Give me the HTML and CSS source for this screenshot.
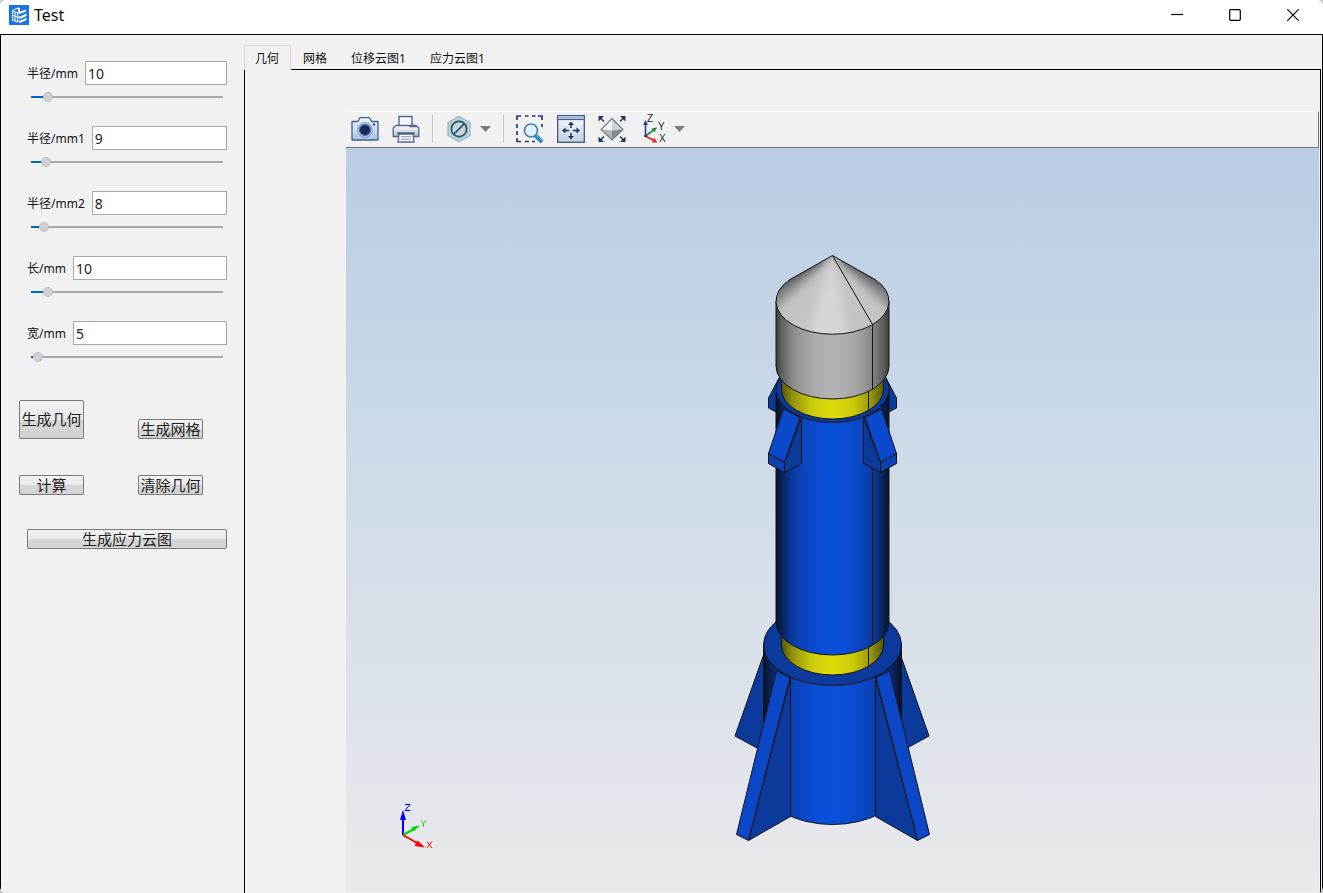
FILE: index.html
```html
<!DOCTYPE html>
<html lang="zh-CN">
<head>
<meta charset="utf-8">
<title>Test</title>
<link rel="stylesheet" href="styles.css">
</head>
<body>
<div class="window">
  <header class="titlebar">
    <svg class="app-icon" viewBox="0 0 20 20" aria-hidden="true">
      <rect width="20" height="20" fill="#1a73e8"/>
      <path d="M3.500 5.500 9.500 2.800M3.500 5V15L8.500 17M3.500 6.500 8.500 7.500M3.500 10.500 8.500 12M8.500 7.500V17M6 7V16" fill="none" stroke="#e4effd" stroke-width="1.200"/>
      <path d="M9 2.500 11 3V6.500L17 4.500V6.500L10.500 9 9 8ZM9.500 10.500 11 11.500 17.500 8.500V11L11 14 9.500 13ZM9.500 15 11 15.800 17.500 12.800V15L11 18 9.500 17Z" fill="#fff"/>
    </svg>
    <h1 class="title">Test</h1>
    <div class="window-buttons">
      <button class="window-button" aria-label="最小化"><svg viewBox="0 0 12 12"><path d="M0 5.500H12"/></svg></button>
      <button class="window-button" aria-label="最大化"><svg viewBox="0 0 12 12"><rect x=".7" y=".7" width="10.600" height="10.600" rx="1"/></svg></button>
      <button class="window-button" aria-label="关闭"><svg viewBox="0 0 12 12"><path d="M.3.3 11.700 11.700M11.700.3.3 11.700"/></svg></button>
    </div>
  </header>

  <div class="content">
    <aside class="sidebar">
      <div class="fields">
        <div class="field">
          <div class="field-row"><label for="r0">半径/mm</label><input class="textbox" id="r0" type="text" value="10"></div>
          <input class="slider" type="range" aria-label="半径/mm" min="4" max="95" value="10" style="--fill:17px">
        </div>
        <div class="field">
          <div class="field-row"><label for="r1">半径/mm1</label><input class="textbox" id="r1" type="text" value="9"></div>
          <input class="slider" type="range" aria-label="半径/mm1" min="4" max="95" value="9" style="--fill:15px">
        </div>
        <div class="field">
          <div class="field-row"><label for="r2">半径/mm2</label><input class="textbox" id="r2" type="text" value="8"></div>
          <input class="slider" type="range" aria-label="半径/mm2" min="4" max="95" value="8" style="--fill:13px">
        </div>
        <div class="field">
          <div class="field-row"><label for="len">长/mm</label><input class="textbox" id="len" type="text" value="10"></div>
          <input class="slider" type="range" aria-label="长/mm" min="4" max="95" value="10" style="--fill:17px">
        </div>
        <div class="field">
          <div class="field-row"><label for="wid">宽/mm</label><input class="textbox" id="wid" type="text" value="5"></div>
          <input class="slider" type="range" aria-label="宽/mm" min="4" max="95" value="5" style="--fill:7px">
        </div>
      </div>
      <div class="actions">
        <button class="push tall">生成几何</button>
        <button class="push">生成网格</button>
        <button class="push">计算</button>
        <button class="push">清除几何</button>
      </div>
      <div class="wide-action"><button class="push">生成应力云图</button></div>
    </aside>

    <main class="main">
      <div class="tabs" role="tablist">
        <button class="tab selected" role="tab" aria-selected="true">几何</button>
        <button class="tab" role="tab">网格</button>
        <button class="tab" role="tab">位移云图1</button>
        <button class="tab" role="tab">应力云图1</button>
      </div>
      <div class="pane" role="tabpanel">
        <div class="toolbar" role="toolbar">
          <div class="group">
            <button class="tool" aria-label="截图">
              <svg viewBox="0 0 28 28">
                <defs><linearGradient id="cam" x2="0" y2="1"><stop stop-color="#eef7ff"/><stop offset="1" stop-color="#a9c4e4"/></linearGradient></defs>
                <path d="M1 6.500H7L9 2.700H18.500L20.500 6.500H27V25H1Z" fill="url(#cam)" stroke="#46618f" stroke-width="1.300" stroke-linejoin="round"/>
                <circle cx="14" cy="15" r="7.300" fill="#dfeaf6" stroke="#7890b5"/>
                <circle cx="14" cy="15" r="5.600" fill="#182d5e" stroke="#5874a2" stroke-width="1.200"/>
                <circle cx="23" cy="9.500" r="1.200" fill="#334d80"/>
              </svg>
            </button>
            <button class="tool" aria-label="打印">
              <svg viewBox="0 0 28 28">
                <defs><linearGradient id="prn" x2="0" y2="1"><stop stop-color="#fff"/><stop offset="1" stop-color="#b4bac8"/></linearGradient></defs>
                <path d="M7 10V1.500H20V10" fill="#f4f7fc" stroke="#53678f" stroke-width="1.400"/>
                <path d="M4 10.500H24L26.800 13V21.500H1.200V13Z" fill="url(#prn)" stroke="#53678f" stroke-width="1.300"/>
                <path d="M17.500 11.700H24.500" stroke="#2e4478"/>
                <path d="M5.500 18.500H22.500" stroke="#203665" stroke-width="2"/>
                <path d="M7 19H21L22 27H6Z" fill="#fafcff" stroke="#53678f" stroke-width="1.300"/>
                <path d="M9 21.700H19M9 24.200H19" stroke="#8795ae"/>
              </svg>
            </button>
          </div>
          <span class="separator"></span>
          <div class="group tight">
            <button class="tool" aria-label="隐藏">
              <svg viewBox="0 0 28 28">
                <path d="M14 1.500 25 7.500V20.500L14 26.500 3 20.500V7.500Z" fill="#c3d6da" stroke="#93b1b8" stroke-width="1.200"/>
                <path d="M14 4 22.700 8.800V19.200L14 24 5.300 19.200V8.800Z" fill="#a6c0c7"/>
                <circle cx="14" cy="14" r="7.600" fill="#cbd2d8" stroke="#225b70" stroke-width="1.700"/>
                <path d="M8.800 19.200 19.200 8.800" stroke="#225b70" stroke-width="1.800"/>
              </svg>
            </button>
            <button class="arrow" aria-label="更多"><svg viewBox="0 0 11 6"><path d="M0 0H11L5.500 6Z" fill="#7c7c7c"/></svg></button>
          </div>
          <span class="separator"></span>
          <div class="group">
            <button class="tool" aria-label="框选缩放">
              <svg viewBox="0 0 28 28">
                <path d="M1 5V1H5M9 1H12.500M16 1H19.500M22 1H26V5M26 9V12M1 9V13M1 16V20M1 23V26.500H5M9 26.500H13M16 26.500H19" fill="none" stroke="#2a3a6c" stroke-width="1.700"/>
                <path d="M19.500 20.500 26 27" stroke="#2a83bf" stroke-width="4"/>
                <path d="M20 20 26.500 26.500" stroke="#6db8e6" stroke-width="1"/>
                <circle cx="15" cy="15.500" r="6.500" fill="#e3f1fa" stroke="#3d83b5" stroke-width="1.600"/>
                <path d="M10.500 15A4 4 0 0 1 14.500 11.500" fill="none" stroke="#fff" stroke-width="1.400"/>
              </svg>
            </button>
            <button class="tool" aria-label="平移">
              <svg viewBox="0 0 28 28">
                <defs><linearGradient id="pan" x2="0" y2="1"><stop stop-color="#f7faff"/><stop offset="1" stop-color="#c3cede"/></linearGradient></defs>
                <rect x=".7" y=".7" width="26.600" height="26.600" fill="url(#pan)" stroke="#3f5482" stroke-width="1.300"/>
                <path d="M1.500 1.500H26.500V4H1.500Z" fill="#a9bcd9"/><path d="M1 4.600H27" stroke="#3f5482"/>
                <path d="M14 9V13M14 18V22M8 15.500H12M16 15.500H20" stroke="#20305f" stroke-width="1.500"/>
                <path d="M14 6.500 17 10H11ZM14 24.500 17 21H11ZM5 15.500 8.500 12.500V18.500ZM23 15.500 19.500 12.500V18.500Z" fill="#20305f"/>
              </svg>
            </button>
            <button class="tool" aria-label="适合窗口">
              <svg viewBox="0 0 28 28">
                <path d="M14 3.500 25 14.500 14 25 3 14.500Z" fill="#d8d8d8"/>
                <path d="M14 3.500V15.500L3 14.500Z" fill="#f3f3f3"/><path d="M14 3.500 25 14.500 14 15.500Z" fill="#d0d1d3"/>
                <path d="M3 14.500 14 15.500V25Z" fill="#b1b3b7"/><path d="M25 14.500 14 15.500V25Z" fill="#888b91"/>
                <path d="M14 3.500 25 14.500 14 25 3 14.500Z" fill="none" stroke="#717986" stroke-width="1.100"/>
                <path d="M2 2.500 6 6.500M26 2.500 22 6.500M2 25.500 6 21.500M26 25.500 22 21.500" stroke="#253663" stroke-width="1.600"/>
                <path d="M.5 1H6L.5 6.500ZM27.500 1H22L27.500 6.500ZM.5 27H6L.5 21.500ZM27.500 27H22L27.500 21.500Z" fill="#253663"/>
              </svg>
            </button>
            <div class="group tight">
              <button class="tool" aria-label="视图方向">
                <svg viewBox="0 0 28 28">
                  <path d="M6.500 21V8" stroke="#2643a2" stroke-width="1.600"/><path d="M6.500 5 9 10H4Z" fill="#2643a2"/>
                  <path d="M6.500 21 14 15.500" stroke="#168a3d" stroke-width="1.600"/><path d="M18 12.500 15.500 17.500 12.500 13.500Z" fill="#168a3d"/>
                  <path d="M6.500 21 14 25" stroke="#e5252b" stroke-width="1.600"/><path d="M18.500 27.500 13 27.500 15 22.500Z" fill="#e5252b"/>
                  <circle cx="6.500" cy="21" r="1.200" fill="#222"/>
                  <g class="axis-label"><text x="8" y="7">Z</text><text x="19" y="15">Y</text><text x="20" y="27">X</text></g>
                </svg>
              </button>
              <button class="arrow" aria-label="更多视图"><svg viewBox="0 0 11 6"><path d="M0 0H11L5.500 6Z" fill="#7c7c7c"/></svg></button>
            </div>
          </div>
        </div>

        <div class="viewport">
          <svg class="model" viewBox="346 148 973 744" role="img" aria-label="火箭模型">
            <defs>
              <linearGradient id="blue">
                <stop stop-color="#071126"/><stop offset=".05" stop-color="#092254"/><stop offset=".12" stop-color="#0a3690"/><stop offset=".24" stop-color="#0b45be"/><stop offset=".4" stop-color="#0b4ed6"/><stop offset=".5" stop-color="#0b50dc"/><stop offset=".6" stop-color="#0b4ed6"/><stop offset=".76" stop-color="#0b45be"/><stop offset=".88" stop-color="#0a3690"/><stop offset=".95" stop-color="#092254"/><stop offset="1" stop-color="#071126"/>
              </linearGradient>
              <linearGradient id="grey">
                <stop stop-color="#3c3c3c"/><stop offset=".05" stop-color="#606060"/><stop offset=".16" stop-color="#8f8f8f"/><stop offset=".34" stop-color="#acacac"/><stop offset=".52" stop-color="#b4b4b4"/><stop offset=".7" stop-color="#a6a6a6"/><stop offset=".84" stop-color="#8a8a8a"/><stop offset=".95" stop-color="#5c5c5c"/><stop offset="1" stop-color="#3c3c3c"/>
              </linearGradient>
              <linearGradient id="yellow">
                <stop stop-color="#57570a"/><stop offset=".12" stop-color="#96960b"/><stop offset=".3" stop-color="#cbcb0b"/><stop offset=".5" stop-color="#dedc0b"/><stop offset=".7" stop-color="#cbcb0b"/><stop offset=".88" stop-color="#96960b"/><stop offset="1" stop-color="#57570a"/>
              </linearGradient>
              <clipPath id="coneClip"><path d="M832.500 255.500 790 279.500A56.500 33 0 1 0 875 279.500Z"/></clipPath>
              <filter id="soft" x="-20%" y="-20%" width="140%" height="140%"><feGaussianBlur stdDeviation="5"/></filter>
            </defs>
            <g stroke="#141414" stroke-width="1" stroke-linejoin="round">
              <!-- rear fins -->
              <path id="rearFin" d="M763.500 655 735 736 757 748 775 720V650Z" fill="#0b3a9c"/>
              <use href="#rearFin" transform="translate(1664 0) scale(-1 1)"/>
              <path id="rearTopFin" d="M779 378 768.500 398V408L777 412.500 790 400Z" fill="#0b3a9c"/>
              <use href="#rearTopFin" transform="translate(1665 0) scale(-1 1)"/>
              <!-- base -->
              <path d="M763.500 645V784A69 40.500 0 0 0 901.500 784V645Z" fill="url(#blue)"/>
              <ellipse cx="832.500" cy="645" rx="69" ry="40.500" fill="#0b3a9c"/>
              <path d="M781.500 630V645A51 30 0 0 0 883.500 645V630Z" fill="url(#yellow)"/>
              <path d="M868.500 640V666"/>
              <!-- body -->
              <path d="M776 389.500V622A56.500 33 0 0 0 889 622V389.500Z" fill="url(#blue)"/>
              <path d="M872.500 410V643"/>
              <ellipse cx="832.500" cy="389.500" rx="56.500" ry="33" fill="#0b3a9c"/>
              <path d="M781.500 380V389.500A51 29.500 0 0 0 883.500 389.500V380Z" fill="url(#yellow)"/>
              <path d="M868.500 385V411"/>
              <!-- nose -->
              <path d="M776 301V366A56.500 33 0 0 0 889 366V301Z" fill="url(#grey)"/>
              <g clip-path="url(#coneClip)" stroke="none">
                <path d="M832.500 255.500 770 275V345H895V275Z" fill="#c4c4c4"/>
                <g filter="url(#soft)">
                  <path d="M832.500 255.500 765 270V318Z" fill="#858585"/>
                  <path d="M832.500 255.500 765 255V296Z" fill="#303030"/>
                  <path d="M832.500 255.500 900 270V318Z" fill="#858585"/>
                  <path d="M832.500 255.500 900 255V296Z" fill="#303030"/>
                  <path d="M832.500 252 805 345H850Z" fill="#d6d6d6"/>
                </g>
              </g>
              <path d="M832.500 255.500 790 279.500A56.500 33 0 1 0 875 279.500Z" fill="none"/>
              <path d="M832.500 255.500 872.500 324.500V390" fill="none"/>
              <!-- upper front fins -->
              <g id="frontTopFin">
                <path d="M783.500 409 800 417.500 784.500 462.500 768.500 453.500Z" fill="#0b49cc"/>
                <path d="M768.500 453.500 784.500 462.500V472.500L768.500 463.500Z" fill="#0b41b0"/>
                <path d="M801.500 418V463.500L784.500 472.500V462.500Z" fill="#0b3a9c"/>
              </g>
              <use href="#frontTopFin" transform="translate(1665 0) scale(-1 1)"/>
              <!-- lower front fins -->
              <g id="frontFin">
                <path d="M776.500 671 790 677.500 748.500 840.500 736.500 834.500Z" fill="#0b47c6"/>
                <path d="M790.500 677.500V816.500L748.500 840.500Z" fill="#0b3a9c"/>
              </g>
              <use href="#frontFin" transform="translate(1666 0) scale(-1 1)"/>
            </g>
          </svg>
          <svg class="triad" viewBox="396 800 44 52" role="img" aria-label="坐标轴">
            <path d="M403 835V818" stroke="#00f" stroke-width="2"/><path d="M403 810 406 820H400Z" fill="#00f"/>
            <path d="M403 835 413 829.500" stroke="#00d800" stroke-width="2"/><path d="M420 825.500 413.500 831.500 411.500 827Z" fill="#00d800"/>
            <path d="M403 835 418 843.500" stroke="#f00" stroke-width="2"/><path d="M425 847.500 414.500 846 417.500 840.500Z" fill="#f00"/>
            <path d="M405 804.500H410L405 810.500H410.500" fill="none" stroke="#00f"/>
            <path d="M421 820.500 423.500 823.500 426 820.500M423.500 823.500V827" fill="none" stroke="#00d800"/>
            <path d="M427 841.500 432 848M432 841.500 427 848" fill="none" stroke="#f00"/>
          </svg>
        </div>
      </div>
    </main>
  </div>
</div>
</body>
</html>
```
FILE: styles.css
```css
* { box-sizing: border-box; }

body {
  margin: 0;
  background: #c8c8c8;
  color: #111;
  font: 12px/16px "Noto Sans", "Noto Sans CJK SC", sans-serif;
}

button {
  margin: 0;
  padding: 0;
  border: 0;
  background: none;
  color: inherit;
  font: inherit;
}

svg { display: block; }

.window {
  display: flex;
  flex-direction: column;
  height: 100vh;
  border-radius: 6px;
  overflow: hidden;
  background: #f1f1f1;
}

.titlebar {
  display: flex;
  flex: none;
  align-items: center;
  gap: 5px;
  height: 34px;
  padding: 0 15px 4px 9px;
  background: #fff;
}

.app-icon { width: 20px; height: 20px; }

.title {
  margin: 0;
  font-size: 16px;
  line-height: 20px;
  font-weight: 400;
}

.window-buttons {
  display: flex;
  gap: 28px;
  margin-left: auto;
}

.window-button {
  width: 30px;
  height: 28px;
  padding: 0 9px;
}

.window-button svg {
  width: 12px;
  height: 12px;
  fill: none;
  stroke: #000;
  stroke-width: 1.2px;
}

.content {
  display: flex;
  flex: 1;
  min-height: 0;
  border: 1px solid #000;
  border-bottom: 0;
}

.sidebar {
  flex: none;
  width: 243px;
  padding: 26px 9px 0 18px;
}

.fields {
  display: flex;
  flex-direction: column;
  gap: 24px;
  padding: 0 8px;
}

.field {
  display: flex;
  flex-direction: column;
  gap: 7px;
}

.field-row {
  display: flex;
  align-items: center;
  gap: 7px;
}

.field-row label { padding-top: 2px; }

.textbox {
  flex: 1;
  min-width: 0;
  height: 24px;
  padding: 0 2px;
  border: 1px solid #a9a9a9;
  border-radius: 0;
  background: #fff;
  color: #222;
  font: 14px/20px "Noto Sans", sans-serif;
}

.slider {
  appearance: none;
  height: 10px;
  margin: 0 4px;
  background: linear-gradient(#0067c0, #0067c0) left center / var(--fill) 2px no-repeat,
              linear-gradient(#a9a9a9, #a9a9a9) left center / 100% 2px no-repeat;
}

.slider::-webkit-slider-thumb {
  appearance: none;
  width: 10px;
  height: 10px;
  border: 1px dotted #b0b0b0;
  border-radius: 50%;
  background: #d0d0d0;
}

.actions {
  display: grid;
  grid-template-columns: 65px 65px;
  gap: 36px 54px;
  align-items: end;
  margin-top: 38px;
}

.push {
  height: 20px;
  border: 1px solid #7a7a7a;
  border-radius: 2px;
  background: linear-gradient(#f2f2f2, #e9e9e9 50%, #d6d6d6 50%, #d2d2d2);
  color: #222;
  font-size: 15px;
  line-height: 18px;
  white-space: nowrap;
}

.push.tall {
  height: 39px;
  padding-bottom: 2px;
}

.wide-action {
  display: grid;
  padding: 0 8px;
  margin-top: 34px;
}

.main {
  display: flex;
  flex: 1;
  flex-direction: column;
  min-width: 0;
  padding: 10px 1px 0 0;
}

.tabs {
  display: flex;
  flex: none;
  height: 25px;
  margin-bottom: -1px;
  z-index: 1;
}

.tab {
  padding: 2px 12px 0;
  white-space: nowrap;
}

.tab.selected {
  padding: 2px 11px 0 10px;
  border: 1px solid #d9d9d9;
  border-bottom: 0;
  background: #f1f1f1;
}

.pane {
  display: flex;
  flex: 1;
  flex-direction: column;
  min-height: 0;
  padding: 41px 1px 1px 101px;
  border: 1px solid #000;
  border-bottom: 0;
}

.toolbar {
  display: flex;
  flex: none;
  align-items: center;
  gap: 12px;
  height: 37px;
  padding: 0 0 2px 5px;
  border: solid;
  border-width: 1px 1px 1px 0;
  border-color: #fff #777 #777;
}

.group {
  display: flex;
  align-items: center;
  gap: 13px;
}

.group.tight { gap: 7px; }

.tool, .tool svg { width: 28px; height: 28px; }
.tool svg { overflow: visible; }

.arrow, .arrow svg { width: 11px; height: 6px; }

.axis-label {
  fill: #222;
  font: 10px "Liberation Sans", sans-serif;
}

.separator {
  width: 1px;
  height: 28px;
  background: #c9c9c9;
}

.viewport {
  position: relative;
  flex: 1;
  min-height: 0;
  background: linear-gradient(#b9cde5, #cfdce8 45%, #e9e9ec);
}

.model { width: 100%; height: 100%; }

.triad {
  position: absolute;
  left: 50px;
  bottom: 40px;
  width: 44px;
  height: 52px;
}
```
